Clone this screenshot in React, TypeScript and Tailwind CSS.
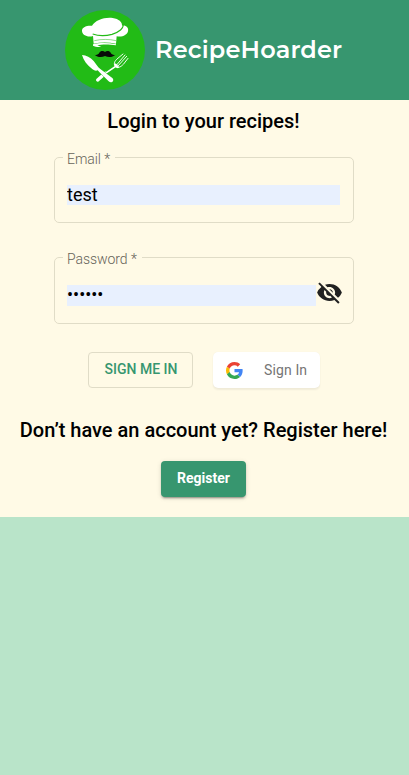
import type { ReactNode } from "react";
import { MdVisibilityOff } from "react-icons/md";

function Logo() {
  return (
    <svg className="size-20 shrink-0" viewBox="15 15 240 240" aria-label="Chef logo">
      <circle cx="135" cy="135" r="120" fill="#22bb16" />
      <g fill="#fff">
        <path d="M99 93C82 98 67 90 66 78C65 67 78 61 96 62C106 46 132 36 158 39C177 42 187 51 186 62C198 60 207 68 204 79C201 91 187 97 170 94L168 116C146 111 122 111 101 116Z" />
        <path d="M99 118C118 113 144 113 168 118L168 121C144 117 124 118 112 121L124 126C114 127 104 125 99 122Z" />
      </g>
      <path d="M189 56C193 70 176 82 156 88C136 93 116 93 98 87" fill="none" stroke="#22bb16" strokeWidth="3.5" />
      <path d="M103 107C124 102 148 102 168 107" fill="none" stroke="#22bb16" strokeWidth="1.5" />
      <g fill="none" stroke="#fff" strokeLinecap="round">
        <path d="M113 225L136 205" strokeWidth="10" />
        <path d="M136 205L167 184" strokeWidth="5" />
        <path d="M165 184C160 174 165 168 171 162L189 147M169 181L195 150M173 184L200 154M168 187C177 190 185 183 190 178L204 160" strokeWidth="2.8" />
        <path d="M166 179L173 186" strokeWidth="7" />
      </g>
      <path d="M66 150C79 151 91 157 101 168L115 187L121 192L157 219C165 227 154 237 146 229L120 203L113 196C107 199 101 196 94 190C81 179 71 167 66 150Z" fill="#fff" stroke="#22bb16" strokeWidth="2.5" paintOrder="stroke" />
      <path d="M104 149C110 151 115 148 118 143C121 137 131 137 135 141C139 137 149 137 152 143C155 148 160 151 166 149C158 158 144 158 135 153C126 158 112 158 104 149Z" fill="#080b08" />
    </svg>
  );
}

function GoogleIcon() {
  return (
    <svg className="size-[17px]" viewBox="0 0 48 48" aria-hidden="true">
      <path fill="#EA4335" d="M24 9.5c3.54 0 6.71 1.22 9.21 3.6l6.85-6.85C35.9 2.38 30.47 0 24 0 14.62 0 6.51 5.38 2.56 13.22l7.98 6.19C12.43 13.72 17.74 9.5 24 9.5z" />
      <path fill="#4285F4" d="M46.98 24.55c0-1.57-.15-3.09-.38-4.55H24v9.02h12.94c-.58 2.96-2.26 5.48-4.78 7.18l7.73 6c4.51-4.18 7.09-10.36 7.09-17.65z" />
      <path fill="#FBBC05" d="M10.53 28.59c-.48-1.45-.76-2.99-.76-4.59s.27-3.14.76-4.59l-7.98-6.19C.92 16.46 0 20.12 0 24c0 3.88.92 7.54 2.56 10.78l7.97-6.19z" />
      <path fill="#34A853" d="M24 48c6.48 0 11.93-2.13 15.89-5.81l-7.73-6c-2.15 1.45-4.92 2.3-8.16 2.3-6.26 0-11.57-4.22-13.47-9.91l-7.98 6.19C6.51 42.62 14.62 48 24 48z" />
    </svg>
  );
}

function Field({ label, className, children }: { label: string; className: string; children: ReactNode }) {
  return (
    <fieldset className={`w-[300px] min-w-0 rounded-[5px] border border-[#e0dcc7] pl-2 ${className}`}>
      <legend className="pt-1 pr-[5px] pl-1 text-[14px] leading-[14px] font-light tracking-[-0.06px] text-[#666359]">{label}</legend>
      <div className="flex pt-[19px] pl-1">{children}</div>
    </fieldset>
  );
}

export default function App() {
  return (
    <div className="min-h-screen bg-[#b9e4c9] font-['Roboto',sans-serif] text-black">
      <header className="flex h-[100px] items-center justify-center gap-2.5 bg-[#37966f] pr-0.5">
        <Logo />
        <h1 className="w-[187px] font-['Montserrat','Inter',sans-serif] text-[24px] leading-8 font-semibold tracking-[0.16px] whitespace-nowrap text-white">
          RecipeHoarder
        </h1>
      </header>
      <main className="flex h-[417px] flex-col items-center bg-[#fffae6] pr-0.5">
        <h2 className="mt-[5px] h-8 text-[20px] leading-8 font-medium">Login to your recipes!</h2>
        <form className="flex flex-col items-center pl-px" onSubmit={(e) => e.preventDefault()}>
          <Field label="Email *" className="mt-[11px] h-[75px]">
            <input type="text" defaultValue="test" className="h-5 w-[273px] bg-[#e8f0fe] text-[18px] leading-5 outline-none" />
          </Field>
          <Field label="Password *" className="mt-[25px] h-[76px]">
            <input type="password" defaultValue="secret" className="h-[21px] w-[249px] bg-[#e8f0fe] pb-0.5 text-[18px] leading-[19px] outline-none" />
            <MdVisibilityOff className="-mt-1.5 size-[27px] shrink-0 text-[#212121]" />
          </Field>
          <div className="mt-7 flex gap-5">
            <button className="h-9 w-[105px] rounded border border-[#e0dcc7] pb-0.5 pl-px text-[14px] font-medium text-[#37966f]">SIGN ME IN</button>
            <button className="flex h-9 w-[107px] items-center rounded-[5px] bg-white pl-[13px] text-[14px] tracking-[0.13px] text-[#757575] shadow-[0_2px_2px_rgba(0,0,0,0.06),0_0_1px_rgba(0,0,0,0.06)]">
              <GoogleIcon />
              <span className="ml-[21px]">Sign In</span>
            </button>
          </div>
        </form>
        <h2 className="mt-[26px] h-8 text-[20px] leading-8 font-medium whitespace-nowrap">Don’t have an account yet? Register here!</h2>
        <button className="mt-[15px] h-9 w-[85px] rounded bg-[#37966f] pb-0.5 text-[14px] font-bold text-white shadow-[0_3px_1px_-2px_rgba(0,0,0,0.2),0_2px_2px_rgba(0,0,0,0.14),0_1px_5px_rgba(0,0,0,0.12)]">
          Register
        </button>
      </main>
    </div>
  );
}
